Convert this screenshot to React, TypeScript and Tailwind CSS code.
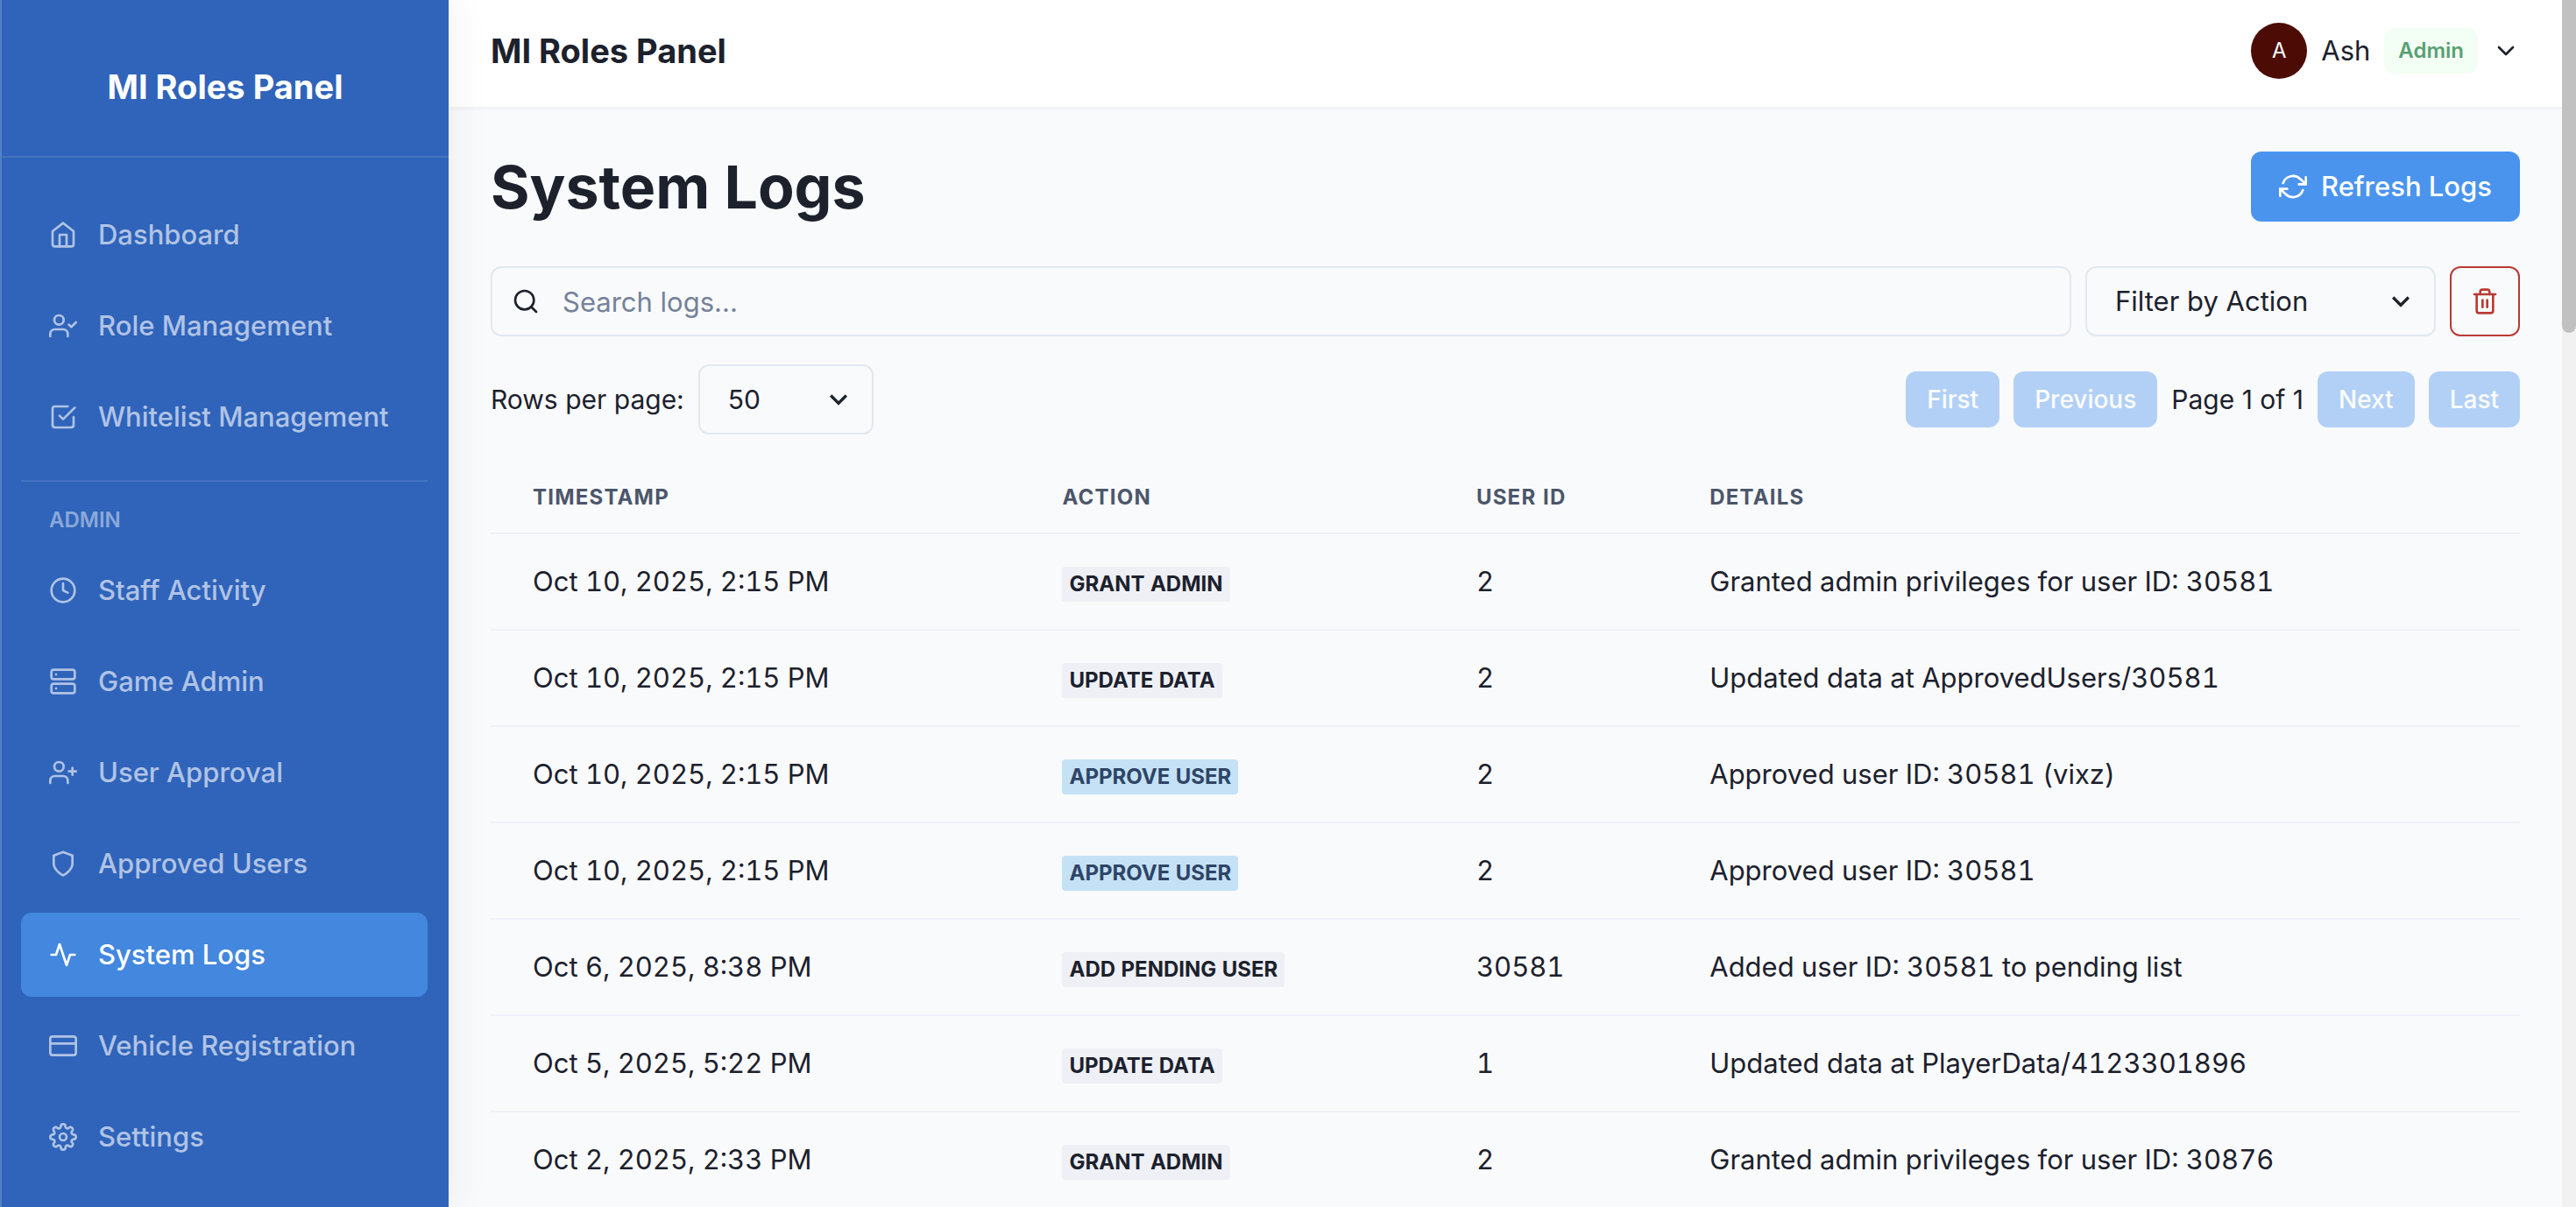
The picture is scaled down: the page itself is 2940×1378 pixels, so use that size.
import type { ReactNode } from "react";
import type { IconType } from "react-icons";
import {
  FiActivity,
  FiCheckSquare,
  FiChevronDown,
  FiClock,
  FiCreditCard,
  FiHome,
  FiRefreshCw,
  FiSearch,
  FiServer,
  FiSettings,
  FiShield,
  FiTrash2,
  FiUserCheck,
  FiUserPlus,
} from "react-icons/fi";

type NavEntry = { label: string; icon: IconType; active?: boolean };

const mainNav: NavEntry[] = [
  { label: "Dashboard", icon: FiHome },
  { label: "Role Management", icon: FiUserCheck },
  { label: "Whitelist Management", icon: FiCheckSquare },
];

const adminNav: NavEntry[] = [
  { label: "Staff Activity", icon: FiClock },
  { label: "Game Admin", icon: FiServer },
  { label: "User Approval", icon: FiUserPlus },
  { label: "Approved Users", icon: FiShield },
  { label: "System Logs", icon: FiActivity, active: true },
  { label: "Vehicle Registration", icon: FiCreditCard },
  { label: "Settings", icon: FiSettings },
];

type LogEntry = { time: string; action: string; userId: string; details: string };

const logs: LogEntry[] = [
  { time: "Oct 10, 2025, 2:15 PM", action: "Grant Admin", userId: "2", details: "Granted admin privileges for user ID: 30581" },
  { time: "Oct 10, 2025, 2:15 PM", action: "Update Data", userId: "2", details: "Updated data at ApprovedUsers/30581" },
  { time: "Oct 10, 2025, 2:15 PM", action: "Approve User", userId: "2", details: "Approved user ID: 30581 (vixz)" },
  { time: "Oct 10, 2025, 2:15 PM", action: "Approve User", userId: "2", details: "Approved user ID: 30581" },
  { time: "Oct 6, 2025, 8:38 PM", action: "Add Pending User", userId: "30581", details: "Added user ID: 30581 to pending list" },
  { time: "Oct 5, 2025, 5:22 PM", action: "Update Data", userId: "1", details: "Updated data at PlayerData/4123301896" },
  { time: "Oct 2, 2025, 2:33 PM", action: "Grant Admin", userId: "2", details: "Granted admin privileges for user ID: 30876" },
];

function NavItem({ label, icon: Icon, active }: NavEntry) {
  return (
    <li>
      <a
        href="#"
        aria-current={active ? "page" : undefined}
        className={
          active
            ? "flex h-24 items-center gap-6 rounded-xl bg-[#4387de] px-8 font-medium text-white"
            : "flex h-24 items-center gap-6 rounded-xl px-8 font-medium text-[#b1c3e5]"
        }
      >
        <Icon className="size-8 shrink-0" aria-hidden="true" />
        <span className="whitespace-nowrap">{label}</span>
      </a>
    </li>
  );
}

function Sidebar() {
  return (
    <aside className="relative z-10 flex w-[512px] shrink-0 flex-col border-l-2 border-[#5480c6] bg-[#2f64ba] shadow-[8px_0_40px_rgba(0,0,0,0.05)]">
      <div className="flex h-[180px] items-center justify-center border-b-2 border-white/10 pt-5">
        <span className="text-[38px] leading-[60px] font-bold text-white">MI Roles Panel</span>
      </div>
      <nav aria-label="Main" className="flex flex-col pt-10 pr-6 pl-[22px]">
        <ul className="flex flex-col gap-2">
          {mainNav.map((item) => (
            <NavItem key={item.label} {...item} />
          ))}
        </ul>
        <hr className="mt-6 border-t-2 border-white/10" />
        <h2 className="mt-6 mb-3 px-8 text-2xl leading-10 font-semibold text-[#8ba9da]">ADMIN</h2>
        <ul className="flex flex-col gap-2">
          {adminNav.map((item) => (
            <NavItem key={item.label} {...item} />
          ))}
        </ul>
      </nav>
    </aside>
  );
}

function Topbar() {
  return (
    <header className="flex h-[122px] shrink-0 items-center justify-between bg-white px-12 pb-1.5 shadow-[0_2px_4px_rgba(0,0,0,0.05)]">
      <span className="text-[38px] leading-[60px] font-bold">MI Roles Panel</span>
      <button type="button" className="flex items-center gap-4">
        <span className="flex size-16 items-center justify-center rounded-full bg-[#4c0b05] text-2xl text-white">A</span>
        <span>Ash</span>
        <span className="flex h-[52px] items-center rounded-xl bg-[#f3fef5] px-4 text-2xl font-semibold text-[#58a072]">Admin</span>
        <FiChevronDown className="size-8" aria-hidden="true" />
      </button>
    </header>
  );
}

function SelectBox({ id, label, className, children }: { id: string; label: string; className: string; children: ReactNode }) {
  return (
    <div className={className}>
      <select
        id={id}
        aria-label={label}
        className="h-20 w-full appearance-none rounded-xl border-2 border-[#e2e8ef] bg-transparent pr-16 pl-8"
      >
        {children}
      </select>
      <svg
        viewBox="0 0 24 24"
        aria-hidden="true"
        className="pointer-events-none absolute inset-y-0 right-5 my-auto size-10 fill-current"
      >
        <path d="M16.59 8.59L12 13.17 7.41 8.59 6 10l6 6 6-6z" />
      </svg>
    </div>
  );
}

function PageButton({ children }: { children: ReactNode }) {
  return (
    <button
      type="button"
      disabled
      className="h-16 rounded-xl bg-[#4a94ee] px-6 text-[28px] font-medium text-white opacity-40"
    >
      {children}
    </button>
  );
}

function ActionBadge({ action }: { action: string }) {
  return (
    <span
      className={
        action === "Approve User"
          ? "inline-block rounded bg-[#c5e1f6] px-2 align-middle text-2xl leading-10 font-bold whitespace-nowrap text-[#2e4566] uppercase"
          : "inline-block rounded bg-[#eef0f6] px-2 align-middle text-2xl leading-10 font-bold whitespace-nowrap text-[#1c212c] uppercase"
      }
    >
      {action}
    </span>
  );
}

function LogTable() {
  return (
    <table className="mt-8 w-full table-fixed border-separate border-spacing-0 text-left tabular-nums">
      <thead>
        <tr className="text-2xl leading-8 tracking-wider text-[#4c566a] uppercase *:border-b-2 *:border-[#eef1f7] *:px-12 *:py-6 *:font-bold">
          <th scope="col" className="w-[26.1%]">Timestamp</th>
          <th scope="col" className="w-[20.4%]">Action</th>
          <th scope="col" className="w-[11.5%]">User ID</th>
          <th scope="col">Details</th>
        </tr>
      </thead>
      <tbody>
        {logs.map((log, i) => (
          <tr key={i} className="h-[110px] *:border-b-2 *:border-[#eef1f7] *:px-12 *:whitespace-nowrap">
            <td>{log.time}</td>
            <td>
              <ActionBadge action={log.action} />
            </td>
            <td>{log.userId}</td>
            <td>{log.details}</td>
          </tr>
        ))}
      </tbody>
    </table>
  );
}

export default function App() {
  return (
    <div className="flex h-screen overflow-hidden bg-[#f9fafc] font-[Inter,sans-serif] text-[31px] leading-[48px] text-[#1c212c]">
      <Sidebar />
      <div className="flex min-w-0 flex-1 flex-col">
        <Topbar />
        <main className="min-h-0 flex-1 overflow-hidden px-12 pt-12">
          <div className="flex items-center justify-between">
            <h1 className="text-[68px] leading-[86px] font-bold">System Logs</h1>
            <button type="button" className="flex h-20 items-center gap-4 rounded-xl bg-[#4a94ee] px-8 font-medium text-white">
              <FiRefreshCw className="size-8" aria-hidden="true" />
              Refresh Logs
            </button>
          </div>

          <div className="mt-12 flex gap-4">
            <div className="relative flex-1">
              <FiSearch className="absolute inset-y-0 left-6 my-auto size-8" aria-hidden="true" />
              <input
                type="search"
                aria-label="Search logs"
                placeholder="Search logs..."
                className="h-20 w-full rounded-xl border-2 border-[#e2e8ef] bg-transparent pr-8 pl-20 placeholder:text-[#758299]"
              />
            </div>
            <SelectBox id="action-filter" label="Filter by Action" className="relative w-[400px]">
              <option>Filter by Action</option>
            </SelectBox>
            <button
              type="button"
              aria-label="Clear logs"
              className="flex size-20 items-center justify-center rounded-xl border-2 border-[#b83b34] text-[#b83b34]"
            >
              <FiTrash2 className="size-8" aria-hidden="true" />
            </button>
          </div>

          <div className="mt-8 flex items-center justify-between text-[30px]">
            <div className="flex items-center gap-4">
              <label htmlFor="page-size">Rows per page:</label>
              <SelectBox id="page-size" label="Rows per page" className="relative w-[200px]">
                <option>50</option>
              </SelectBox>
            </div>
            <div className="flex items-center gap-4">
              <PageButton>First</PageButton>
              <PageButton>Previous</PageButton>
              <span>Page 1 of 1</span>
              <PageButton>Next</PageButton>
              <PageButton>Last</PageButton>
            </div>
          </div>

          <LogTable />
        </main>
      </div>
      <div aria-hidden="true" className="w-4 shrink-0 bg-[#f1f1f1]">
        <div className="h-[380px] rounded-b-full bg-[#c1c1c1]" />
      </div>
    </div>
  );
}
